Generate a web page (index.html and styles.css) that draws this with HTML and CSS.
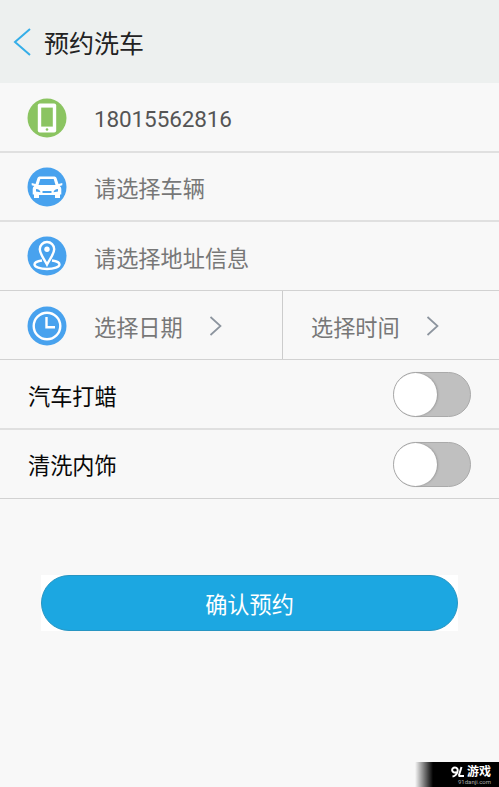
FILE: index.html
```html
<!DOCTYPE html>
<html lang="zh-CN">
<head>
<meta charset="utf-8">
<title>预约洗车</title>
<link rel="stylesheet" href="styles.css">
</head>
<body>
<header class="header">
  <svg class="back" width="18" height="28" viewBox="0 0 18 28"><path d="M17 1 2 14l15 13"/></svg>
  <h1>预约洗车</h1>
</header>
<main>
  <section class="form">
    <div class="row thick tall">
      <svg class="icon" viewBox="0 0 40 40"><circle class="green" cx="20" cy="20" r="19.5"/><rect x="10.8" y="5.5" width="18.4" height="29" rx="2" fill="#fff"/><path class="green" d="M14.2 9.6h11.6v19H14.2z"/><circle class="green" cx="20" cy="31.5" r="1.3"/></svg>
      <span class="phone">18015562816</span>
    </div>
    <div class="row thick">
      <svg class="icon" viewBox="0 0 40 40"><circle class="blue" cx="20" cy="20" r="19.5"/><path fill="#fff" fill-rule="evenodd" d="M12.500 9.500h15q1.500 0 2 1.500l2 6 3.800-1v2.200l-2.600.8q1.600 1.200 1.600 3v5.500h-1.300v3.500h-5v-3H12v3H7v-3.500H5.700V22q0-1.800 1.600-3l-2.600-.8V16l3.800 1 2-6q.5-1.500 2-1.500zm.8 2.500-1.800 6h17l-1.800-6zM9 22v2.500l4.500.8q-.5-3-4.500-3.300zm22 0q-4 .3-4.500 3.300l4.500-.8zM15.500 24v2h9v-2z"/></svg>
      <span class="hint">请选择车辆</span>
    </div>
    <div class="row">
      <svg class="icon" viewBox="0 0 40 40"><circle class="blue" cx="20" cy="20" r="19.5"/><g class="line"><path d="M20 28.500C17 22.500 12.800 18 12.800 13.200a7.200 7.200 0 0 1 14.400 0C27.200 18 23 22.500 20 28.500z"/><path d="M15 24.500c-4.500.6-7.500 2-7.500 4 0 2.600 5.500 4.500 12.500 4.500s12.500-1.900 12.500-4.500c0-2-3-3.400-7.500-4"/></g><circle cx="20" cy="13.200" r="2.700" fill="#fff"/></svg>
      <span class="hint">请选择地址信息</span>
    </div>
    <div class="row split">
      <div class="cell date">
        <svg class="icon" viewBox="0 0 40 40"><circle class="blue" cx="20" cy="20" r="19.5"/><g class="line"><circle cx="20" cy="20" r="13.300"/><path d="M19.500 11v10.200H28"/></g></svg>
        <span class="hint">选择日期</span>
        <svg class="arrow" width="13" height="20" viewBox="0 0 13 20"><path d="m1.500 1 10 9-10 9"/></svg>
      </div>
      <div class="cell time">
        <span class="hint">选择时间</span>
        <svg class="arrow" width="13" height="20" viewBox="0 0 13 20"><path d="m1.500 1 10 9-10 9"/></svg>
      </div>
    </div>
    <div class="row thick tall option"><span>汽车打蜡</span><i class="switch"></i></div>
    <div class="row option"><span>清洗内饰</span><i class="switch"></i></div>
  </section>
  <div class="submit-wrap"><button class="submit">确认预约</button></div>
</main>
<div class="mark">
  <div class="mark-name"><svg width="14" height="12" viewBox="0 0 14 12"><path d="M5.500 6.300C0 7.500 0 1.500 4 1.500c4.500 0 3 8-2.500 9M10.500 1 7.800 9.800M7.500 10h5.500"/></svg><b>游戏</b></div>
  <small>91danji.com</small>
</div>
</body>
</html>
```

FILE: styles.css
```css
* { box-sizing: border-box; }
body {
  margin: 0;
  height: 787px;
  overflow: hidden;
  position: relative;
  background: #f8f8f8;
  font-family: Roboto, "Noto Sans CJK SC", sans-serif;
  font-size: 22.2px;
  color: #111;
}
svg { display: block; flex: none; }
.header {
  height: 83px;
  padding-left: 13px;
  display: flex;
  align-items: center;
  background: #edf0ef;
}
.back { fill: none; stroke: #35aee8; stroke-width: 2; }
h1 {
  margin: 0 0 0 13px;
  padding-top: 6px;
  font-size: 25px;
  line-height: 36px;
  font-weight: 400;
  color: #222;
}
.row {
  height: 69px;
  display: flex;
  align-items: center;
  padding-left: 27px;
  border-bottom: 1px solid #d2d2d2;
}
.tall { height: 70px; }
.thick { border-bottom: 2px solid #e0e0e0; }
.icon { width: 40px; height: 40px; margin-right: 27px; }
.form > .row:first-child { padding-top: 2px; }
.green { fill: #8bc461; }
.blue { fill: #48a2ee; }
.line { fill: none; stroke: #fff; stroke-width: 2.4; }
.phone { font-size: 22.5px; color: #555; padding-top: 1px; letter-spacing: -.12px; }
.hint { color: #777; padding-top: 5px; line-height: 32px; white-space: nowrap; }
.split { padding: 0; align-items: stretch; }
.cell { display: flex; align-items: center; padding-top: 1px; }
.date { width: 283px; padding-left: 27px; border-right: 1px solid #ccc; }
.time { padding-left: 28px; }
.arrow { margin-left: 26px; fill: none; stroke: #8c949e; stroke-width: 1.7; }
.option { padding-left: 28px; padding-right: 28px; justify-content: space-between; color: #080808; }
.tall.option { padding-top: 1px; }
.option span { line-height: 32px; padding-top: 4px; }
.switch {
  width: 78px;
  height: 45px;
  border: 1px solid #aaa;
  border-radius: 23px;
  background: #c0c0c0;
}
.switch::before {
  content: "";
  display: block;
  width: 43px;
  height: 43px;
  border-radius: 50%;
  background: #fff;
  box-shadow: 1px 0 2px #999;
}
.submit-wrap { margin: 76px 41px 0; background: #fff; }
.submit {
  display: block;
  width: 100%;
  height: 56px;
  padding: 0;
  border: 1px solid #2795c2;
  border-radius: 28px;
  background: #1ca7e1;
  color: #fff;
  font: inherit;
}
.mark {
  position: absolute;
  right: 0;
  bottom: 0;
  width: 84px;
  height: 25px;
  padding: 4px 8px 0 0;
  display: flex;
  flex-direction: column;
  align-items: flex-end;
  background: linear-gradient(90deg, transparent, #000 18px);
  color: #fff;
}
.mark-name { display: flex; height: 12px; align-items: center; font-size: 12px; line-height: 12px; }
.mark-name svg { fill: none; stroke: #fff; stroke-width: 2; margin-right: 2px; }
.mark small { font-size: 6px; line-height: 7px; color: #aaa; }
```
